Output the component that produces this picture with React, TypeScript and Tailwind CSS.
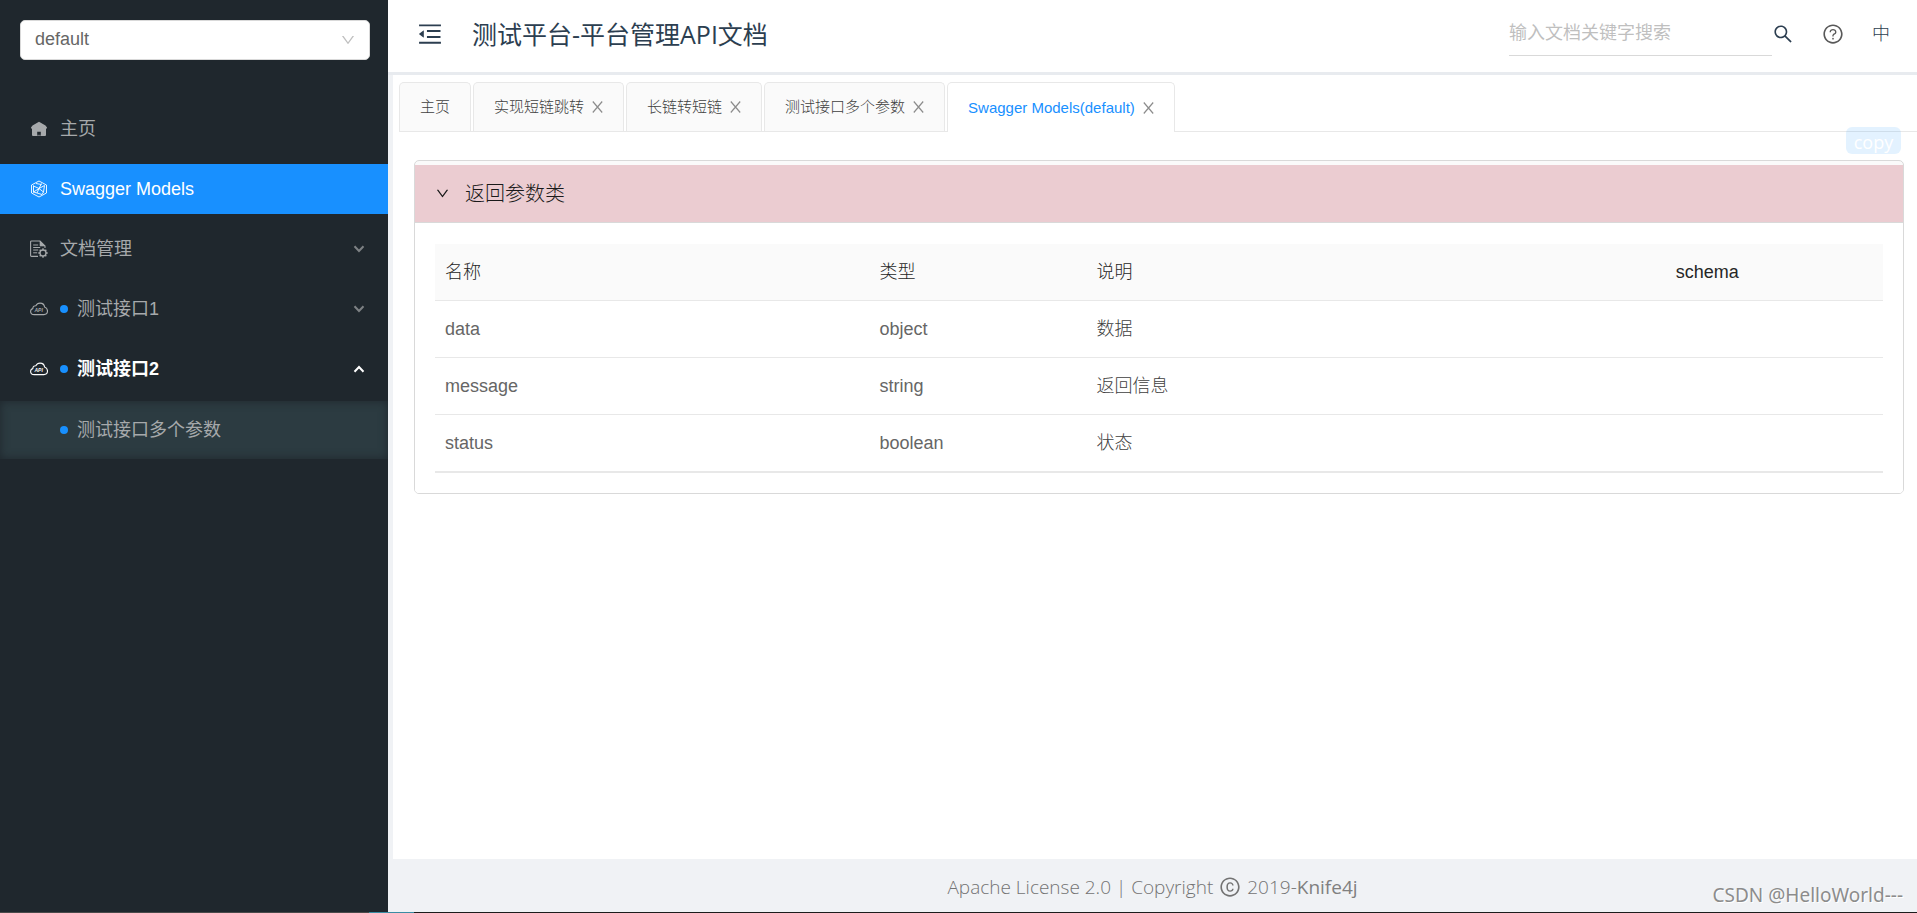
import React, { useState } from "react";
import {
  AiOutlineCopyright,
  AiOutlineDown,
  AiOutlineMenuFold,
  AiOutlineQuestionCircle,
  AiOutlineSearch,
} from "react-icons/ai";
import clsx from "clsx";

interface ModelField {
  name: string;
  type: string;
  description: string;
  schema: string;
}

const fields: ModelField[] = [
  { name: "data", type: "object", description: "数据", schema: "" },
  { name: "message", type: "string", description: "返回信息", schema: "" },
  { name: "status", type: "boolean", description: "状态", schema: "" },
];

const tabs = [
  { key: "home", label: "主页", closable: false },
  { key: "jump", label: "实现短链跳转", closable: true },
  { key: "short", label: "长链转短链", closable: true },
  { key: "params", label: "测试接口多个参数", closable: true },
  { key: "models", label: "Swagger Models(default)", closable: true },
];

function HomeIcon() {
  return (
    <svg viewBox="0 0 18 18" className="w-[18px] h-[18px]" fill="currentColor" aria-hidden="true">
      <path d="M9 1.800 15.500 5.500 17 7.600v.8h-1V15a1 1 0 0 1-1 1h-4.200v-4.200H7.200V16H3a1 1 0 0 1-1-1V8.400H1v-.8l1.500-2.100z" />
      <path d="M7.200 14.800h3.600V16H7.200z" opacity="0.6" />
    </svg>
  );
}

function ModelsIcon() {
  return (
    <svg viewBox="0 0 18 18" className="w-[18px] h-[18px]" fill="none" stroke="currentColor" strokeWidth="0.9" aria-hidden="true">
      <path d="M9 1 16.500 5v8L9 17 1.500 13V5z" />
      <path d="M3.500 5.500v7M3.500 6l5.500 2.500 5.500-3M9 8.500 7 13l5 1.500M7 13l-3.500-1M11.500 3.500 9 8.500l4.500 3.500 1-6.500M6 3.500l5.500 1M3.500 12 9 8.500M12 14.500l1.500-2.500" />
    </svg>
  );
}

function DocIcon() {
  return (
    <svg viewBox="0 0 18 18" className="w-[18px] h-[18px]" fill="none" stroke="currentColor" aria-hidden="true">
      <path d="M8 16.400H1.500a.9.9 0 0 1-.9-.9V1.900a.9.9 0 0 1 .9-.9H10l5 5v2" strokeWidth="1.100" />
      <path d="M10 1v5h5z" fill="currentColor" strokeWidth="0.6" />
      <path d="M3.200 5h5M3.200 7.500h7M3.200 10h5M3.200 12.800h4" strokeWidth="1" />
      <circle cx="13" cy="13" r="3" strokeWidth="1.300" />
      <path d="M13 8.300v1.700M13 16v1.700M8.300 13H10M16 13h1.700M9.700 9.700l1.200 1.200M15.100 15.100l1.200 1.200M9.700 16.300l1.200-1.200M15.100 10.900l1.200-1.200" strokeWidth="1.400" />
    </svg>
  );
}

function CloudApiIcon() {
  return (
    <svg viewBox="0 0 18 18" className="w-[18px] h-[18px]" fill="none" stroke="currentColor" strokeWidth="1.100" aria-hidden="true">
      <path d="M4.300 14.600C2 14.600.6 13.300.6 11.500c0-1.500.9-2.600 2.200-2.900.1-1.900 1.200-2.900 3-2.800C6.700 4 8.200 3.100 10 3.100c2.500 0 4.300 1.600 4.600 4 1.800.6 2.900 2 2.900 3.900 0 2.100-1.400 3.600-3.600 3.600z" />
      <text x="4.500" y="11.600" fontSize="5" fontStyle="italic" fontWeight="bold" fontFamily="Liberation Sans, sans-serif" fill="currentColor" stroke="none">
        API
      </text>
    </svg>
  );
}

function CloseIcon() {
  return (
    <svg viewBox="0 0 11 12" className="w-[11px] h-3" fill="none" stroke="currentColor" strokeWidth="1.200" aria-hidden="true">
      <path d="M.8.500 10.200 11.500M10.200.500.800 11.500" />
    </svg>
  );
}

function Arrow({ open }: { open?: boolean }) {
  return (
    <svg viewBox="0 0 12 8" className="w-3 h-2" fill="none" stroke="currentColor" strokeWidth="2" aria-hidden="true">
      <path d={open ? "M1.500 6.800 6 2l4.500 4.800" : "M1.500 1.200 6 6l4.500-4.800"} />
    </svg>
  );
}

const Dot = () => <span className="w-2 h-2 mr-[9px] rounded-full bg-[#1890ff]" />;

interface MenuItemProps {
  icon?: React.ReactNode;
  label: string;
  dot?: boolean;
  active?: boolean;
  arrow?: "open" | "closed";
}

function MenuItem({ icon, label, dot, active, arrow }: MenuItemProps) {
  return (
    <a
      href="#"
      aria-current={active ? "page" : undefined}
      className={clsx(
        "flex items-center h-[50px] pl-[30px] pr-[23px]",
        active ? "bg-[#1890ff] text-white" : arrow === "open" ? "text-white font-bold" : "text-[#a6a9ab]"
      )}
    >
      <span className="w-[30px] flex items-center">{icon}</span>
      {dot && <Dot />}
      <span className="flex-1">{label}</span>
      {arrow && (
        <span className={arrow === "open" ? "text-white" : "text-[#7d8184]"}>
          <Arrow open={arrow === "open"} />
        </span>
      )}
    </a>
  );
}

function Sidebar() {
  return (
    <aside className="w-[388px] shrink-0 bg-[#1f272d]">
      <div className="relative m-5 mr-[18px]">
        <select
          aria-label="分组"
          className="block w-full h-10 pl-3.5 pr-10 pb-0.5 appearance-none rounded-[5px] border border-[#d9d9d9] bg-white text-[#666]"
        >
          <option>default</option>
        </select>
        <AiOutlineDown className="absolute right-3.5 top-3 w-4 h-4 text-[#bfbfbf] pointer-events-none" />
      </div>
      <nav className="mt-11 flex flex-col gap-2.5">
        <MenuItem icon={<HomeIcon />} label="主页" />
        <MenuItem icon={<ModelsIcon />} label="Swagger Models" active />
        <MenuItem icon={<DocIcon />} label="文档管理" arrow="closed" />
        <MenuItem icon={<CloudApiIcon />} label="测试接口1" dot arrow="closed" />
        <div>
          <MenuItem icon={<CloudApiIcon />} label="测试接口2" dot arrow="open" />
          <div className="mt-[7px] py-1 bg-[#2c3b41] shadow-[inset_0_0_10px_#1f272d]">
            <MenuItem label="测试接口多个参数" dot />
          </div>
        </div>
      </nav>
    </aside>
  );
}

function Header() {
  return (
    <header className="relative flex items-center h-[72px] pb-1 bg-white shadow-[0_3px_0_#e8ebef] text-[#2c3e50]">
      <button type="button" aria-label="收起菜单" className="ml-7">
        <AiOutlineMenuFold className="w-7 h-7" />
      </button>
      <h1 className="ml-7 flex-1 text-[25px] font-['Open_Sans','Noto_Sans_CJK_SC',sans-serif]">
        测试平台-平台管理API文档
      </h1>
      <input
        type="text"
        aria-label="搜索文档"
        placeholder="输入文档关键字搜索"
        className="w-[263px] h-11 border-b border-[#d9d9d9] outline-none placeholder:text-[#bfbfbf]"
      />
      <button type="button" aria-label="搜索">
        <AiOutlineSearch className="w-[22px] h-[22px]" />
      </button>
      <button type="button" aria-label="帮助" className="ml-7 text-[#595959]">
        <AiOutlineQuestionCircle className="w-[22px] h-[22px]" />
      </button>
      <button type="button" className="ml-7 mr-[27px] font-light">
        中
      </button>
    </header>
  );
}

export default function App() {
  const [activeTab, setActiveTab] = useState("models");
  const [open, setOpen] = useState(true);

  return (
    <div className="min-h-screen flex flex-col text-[18px] leading-6 font-['Liberation_Sans','Noto_Sans_CJK_SC',sans-serif]">
      <div className="flex-1 flex">
        <Sidebar />

        <div className="flex-1 min-w-0 flex flex-col bg-[#f0f2f5]">
          <Header />

          <main className="flex-1 ml-[5px] mt-[3px] pt-[7px] bg-white">
            {/* Tabs */}
            <div role="tablist" className="flex gap-0.5 ml-1.5 border-b border-[#e8e8e8] text-[15px] font-light">
              {tabs.map((tab) => (
                <div
                  key={tab.key}
                  className={clsx(
                    "flex items-center px-5 gap-2 border border-b-0 border-[#e8e8e8] rounded-t-[5px]",
                    activeTab === tab.key ? "bg-white text-[#1890ff] -mb-px h-[50px]" : "bg-[#fafafa] text-[#404040] h-[49px]"
                  )}
                >
                  <button
                    type="button"
                    role="tab"
                    aria-selected={activeTab === tab.key}
                    onClick={() => setActiveTab(tab.key)}
                  >
                    {tab.label}
                  </button>
                  {tab.closable && (
                    <button type="button" aria-label={"关闭 " + tab.label} className="text-[#8c8c8c]">
                      <CloseIcon />
                    </button>
                  )}
                </div>
              ))}
            </div>

            <div className="relative pl-[21px] pr-[13px] pt-7">
              <button
                type="button"
                className="absolute right-4 -top-[5px] h-[27px] w-[55px] pt-0.5 rounded-[6px] bg-[#1890ff]/12 text-white font-['Open_Sans',sans-serif]"
              >
                copy
              </button>

              {/* Model panel */}
              <section className="border border-[#d9d9d9] rounded-[5px] bg-[#fafafa] pt-1 overflow-hidden">
                <button
                  type="button"
                  aria-expanded={open}
                  onClick={() => setOpen(!open)}
                  className="flex items-center w-full h-[58px] pl-5 gap-[15px] bg-[#ebccd1] border-b border-[#d9d9d9] text-[20px] text-[#1a1a1a] font-light"
                >
                  <AiOutlineDown className="w-[15px] h-[15px]" />
                  返回参数类
                </button>
                {open && (
                  <div className="bg-white px-5 pt-[21px] pb-5">
                    <table className="w-full table-fixed border-separate border-spacing-0 text-left border-b border-[#e8e8e8] [&_td]:h-[57px] [&_td]:px-2.5 [&_td]:border-b [&_td]:border-[#e8e8e8] [&_th]:h-[57px] [&_th]:px-2.5 [&_th]:border-b [&_th]:border-[#e8e8e8] [&_th]:font-light">
                      <thead className="bg-[#fafafa] text-[#262626]">
                        <tr>
                          <th className="w-[30%]">名称</th>
                          <th className="w-[15%]">类型</th>
                          <th className="w-[40%]">说明</th>
                          <th className="w-[15%]">schema</th>
                        </tr>
                      </thead>
                      <tbody className="text-[#666]">
                        {fields.map((field) => (
                          <tr key={field.name}>
                            <td>{field.name}</td>
                            <td>{field.type}</td>
                            <td className="font-light text-[#404040]">{field.description}</td>
                            <td>{field.schema}</td>
                          </tr>
                        ))}
                      </tbody>
                    </table>
                  </div>
                )}
              </section>
            </div>
          </main>

          <footer className="relative flex items-center justify-center h-[53px] pt-0.5 text-[19px] text-[#737373] font-light font-['Open_Sans',sans-serif]">
            <span>Apache License 2.0 | Copyright</span>
            <AiOutlineCopyright className="w-[22px] h-[22px] mx-1.5" />
            <span>
              2019-<a href="#" className="font-normal text-[#808080]">Knife4j</a>
            </span>
            <span className="absolute right-3.5 bottom-[5px] font-normal text-[#8c8c8c] [text-shadow:1px_1px_0_#fff] font-['Noto_Sans',sans-serif]">
              CSDN @HelloWorld---
            </span>
          </footer>
        </div>
      </div>

      {/* Desktop edge under the window */}
      <div className="flex h-px bg-[#1c1c1c]">
        <span className="w-[369px] bg-[#4a4a4a]" />
        <span className="w-[45px] bg-[#3a8ca3]" />
      </div>
    </div>
  );
}
